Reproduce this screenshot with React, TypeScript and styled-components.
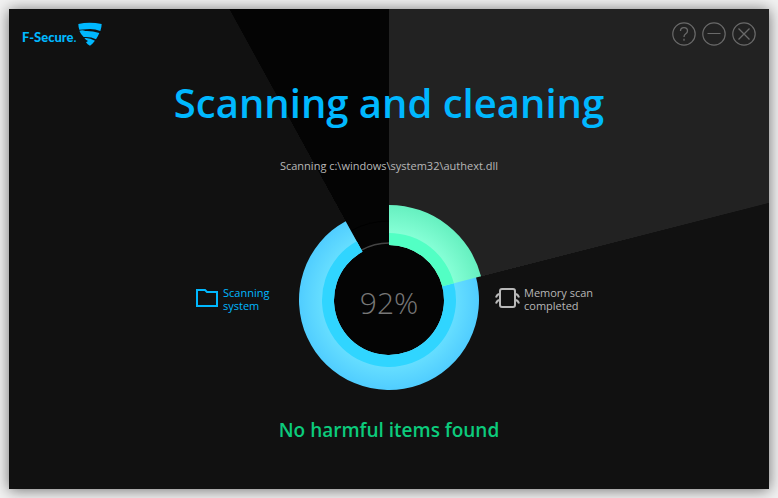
import React from "react";
import styled, { createGlobalStyle } from "styled-components";

const GlobalStyle = createGlobalStyle`
  * { box-sizing: border-box; }
  body {
    margin: 0;
    background: #f2f2f2;
    font-family: "Open Sans", "Noto Sans", sans-serif;
  }
`;

const Page = styled.div`
  display: flex;
  min-height: 100vh;
  padding: 9px;
`;

const AppWindow = styled.main`
  flex: 1;
  display: flex;
  flex-direction: column;
  background: conic-gradient(
    at 50% 291px,
    #222 0deg 75.6deg,
    #111 75.7deg 331.2deg,
    #040404 331.3deg 360deg
  );
  box-shadow: 0 1px 14px rgba(0, 0, 0, 0.55);
`;

const TitleBar = styled.header`
  display: flex;
  align-items: flex-start;
  justify-content: space-between;
  padding: 13px;
`;

const Brand = styled.div`
  display: flex;
  align-items: flex-end;
  gap: 1px;
  height: 24px;
  color: #00b8ff;
`;

const BrandName = styled.span`
  font: 900 13px/18px Lato, sans-serif;
`;

const BrandDot = styled.span`
  font-weight: 400;
`;

const WindowControls = styled.nav`
  display: flex;
  gap: 6px;
`;

const ControlButton = styled.button`
  display: flex;
  width: 24px;
  height: 24px;
  padding: 0;
  border: 0;
  background: none;
  color: #6a6a6a;
  cursor: pointer;
`;

const Title = styled.h1`
  margin: 14px 0 0;
  color: #00b8ff;
  font-size: 40px;
  font-weight: 600;
  line-height: 60px;
  text-align: center;
`;

const CurrentFile = styled.p`
  margin: 25px 0 0;
  color: #b8b8b8;
  font-size: 11px;
  line-height: 16px;
  text-align: center;
`;

const Stage = styled.section`
  display: grid;
  grid-template-columns: 1fr 190px 1fr;
  align-items: center;
  column-gap: 11px;
  margin-top: 31px;
`;

const Step = styled.div<{ $active?: boolean }>`
  display: flex;
  align-items: center;
  justify-self: ${(p) => (p.$active ? "end" : "start")};
  gap: 4px;
  width: ${(p) => (p.$active ? "88px" : "auto")};
  margin-bottom: 2px;
  color: ${(p) => (p.$active ? "#00b8ff" : "#b8b8b8")};
  font-size: 11px;
  line-height: 13px;
`;

const Gauge = styled.div`
  display: grid;
  place-items: center;
  > * { grid-area: 1 / 1; }
`;

const Percent = styled.span`
  margin-top: 6px;
  color: #777;
  font-size: 30px;
  font-weight: 300;
  line-height: 40px;
`;

const Result = styled.p`
  margin: 21px 0 0;
  color: #0ccb7c;
  font-size: 19px;
  font-weight: 600;
  line-height: 28px;
  text-align: center;
`;

const point = (radius: number, degrees: number) => {
  const a = (degrees * Math.PI) / 180;
  return `${(95 + radius * Math.sin(a)).toFixed(2)} ${(95 - radius * Math.cos(a)).toFixed(2)}`;
};

const ring = (inner: number, outer: number, from: number, to: number) => {
  const large = to - from > 180 ? 1 : 0;
  return `M${point(outer, from)}A${outer} ${outer} 0 ${large} 1 ${point(outer, to)}L${point(inner, to)}A${inner} ${inner} 0 ${large} 0 ${point(inner, from)}Z`;
};

const GaugeChart = () => (
  <svg width="190" height="190" viewBox="0 0 190 190" aria-hidden="true">
    <defs>
      <radialGradient id="blue" gradientUnits="userSpaceOnUse" cx="95" cy="95" r="95">
        <stop offset="0.7" stopColor="#66deff" />
        <stop offset="0.95" stopColor="#50cdff" />
      </radialGradient>
      <radialGradient id="green" gradientUnits="userSpaceOnUse" cx="95" cy="95" r="95">
        <stop offset="0.7" stopColor="#86ffd6" />
        <stop offset="1" stopColor="#66f0c0" />
      </radialGradient>
    </defs>
    <circle cx="95" cy="95" r="56" fill="#040404" />
    <path d={`M${point(79, 332)}A79 79 0 0 1 ${point(79, 360)}`} fill="none" stroke="#000" />
    <path d={`M${point(57, 331)}A57 57 0 0 1 ${point(57, 360)}`} fill="none" stroke="#444" strokeWidth="1.5" />
    <path d={ring(55, 90, 74, 331.2)} fill="url(#blue)" />
    <path d={ring(55, 67, 74, 331.2)} fill="#30d5ff" />
    <path d={ring(55, 95, 0, 75.6)} fill="url(#green)" />
    <path d={ring(55, 67, 0, 75.6)} fill="#52ffc4" />
  </svg>
);

const BrandMark = () => (
  <svg width="24" height="24" viewBox="0 0 72 72" fill="currentColor" aria-hidden="true">
    <path d="M1 6Q34-2 71 6Q71 16 67 27Q46 19 25 22Q13 23 4 23Q1 15 1 6Z" />
    <path d="M4 26Q14 23 22 27Q42 26 64 33Q60 43 54 52Q38 43 17 45Q9 38 4 26Z" />
    <path d="M19 48Q34 46 51 56Q44 65 36 71Q28 68 24 61L30 57Q23 54 19 48Z" />
  </svg>
);

const ControlIcon = ({ children }: { children: React.ReactNode }) => (
  <svg width="24" height="24" viewBox="0 0 24 24" fill="none" stroke="currentColor" aria-hidden="true">
    <circle cx="12" cy="12" r="11.2" strokeWidth="1.2" />
    {children}
  </svg>
);

const FolderIcon = () => (
  <svg width="24" height="24" viewBox="0 0 24 24" fill="none" stroke="currentColor" strokeWidth="2" aria-hidden="true">
    <path d="M2 3H10L12 5H22V19H2Z" />
  </svg>
);

const ChipIcon = () => (
  <svg width="25" height="24" viewBox="0 0 25 24" fill="none" stroke="currentColor" strokeWidth="2" aria-hidden="true">
    <rect x="5" y="2" width="15" height="18" rx="2" />
    <path d="M5 7Q2 7 1 10.5M5 13Q2 13 1 16.5M20 7Q23 7 24 10.5M20 13Q23 13 24 16.5" />
  </svg>
);

export default function App() {
  return (
    <>
      <GlobalStyle />
      <Page>
        <AppWindow>
          <TitleBar>
            <Brand>
              <BrandName>F-Secure<BrandDot>.</BrandDot></BrandName>
              <BrandMark />
            </Brand>
            <WindowControls aria-label="Window">
              <ControlButton aria-label="Help">
                <ControlIcon>
                  <path d="M8.5 9Q8.5 5.7 12 5.7T15.5 9Q15.5 10.8 13.5 12Q12 13 12 15M12 16.8V18.8" strokeWidth="1.3" />
                </ControlIcon>
              </ControlButton>
              <ControlButton aria-label="Minimize">
                <ControlIcon>
                  <path d="M5.5 11.5H18.5" />
                </ControlIcon>
              </ControlButton>
              <ControlButton aria-label="Close">
                <ControlIcon>
                  <path d="M6.5 6.5L17.5 17.5M17.5 6.5L6.5 17.5" strokeWidth="1.3" />
                </ControlIcon>
              </ControlButton>
            </WindowControls>
          </TitleBar>
          <Title>Scanning and cleaning</Title>
          <CurrentFile>Scanning c:\windows\system32\authext.dll</CurrentFile>
          <Stage>
            <Step $active>
              <FolderIcon />
              <span>Scanning<br />system</span>
            </Step>
            <Gauge>
              <GaugeChart />
              <Percent>92%</Percent>
            </Gauge>
            <Step>
              <ChipIcon />
              <span>Memory scan<br />completed</span>
            </Step>
          </Stage>
          <Result>No harmful items found</Result>
        </AppWindow>
      </Page>
    </>
  );
}
